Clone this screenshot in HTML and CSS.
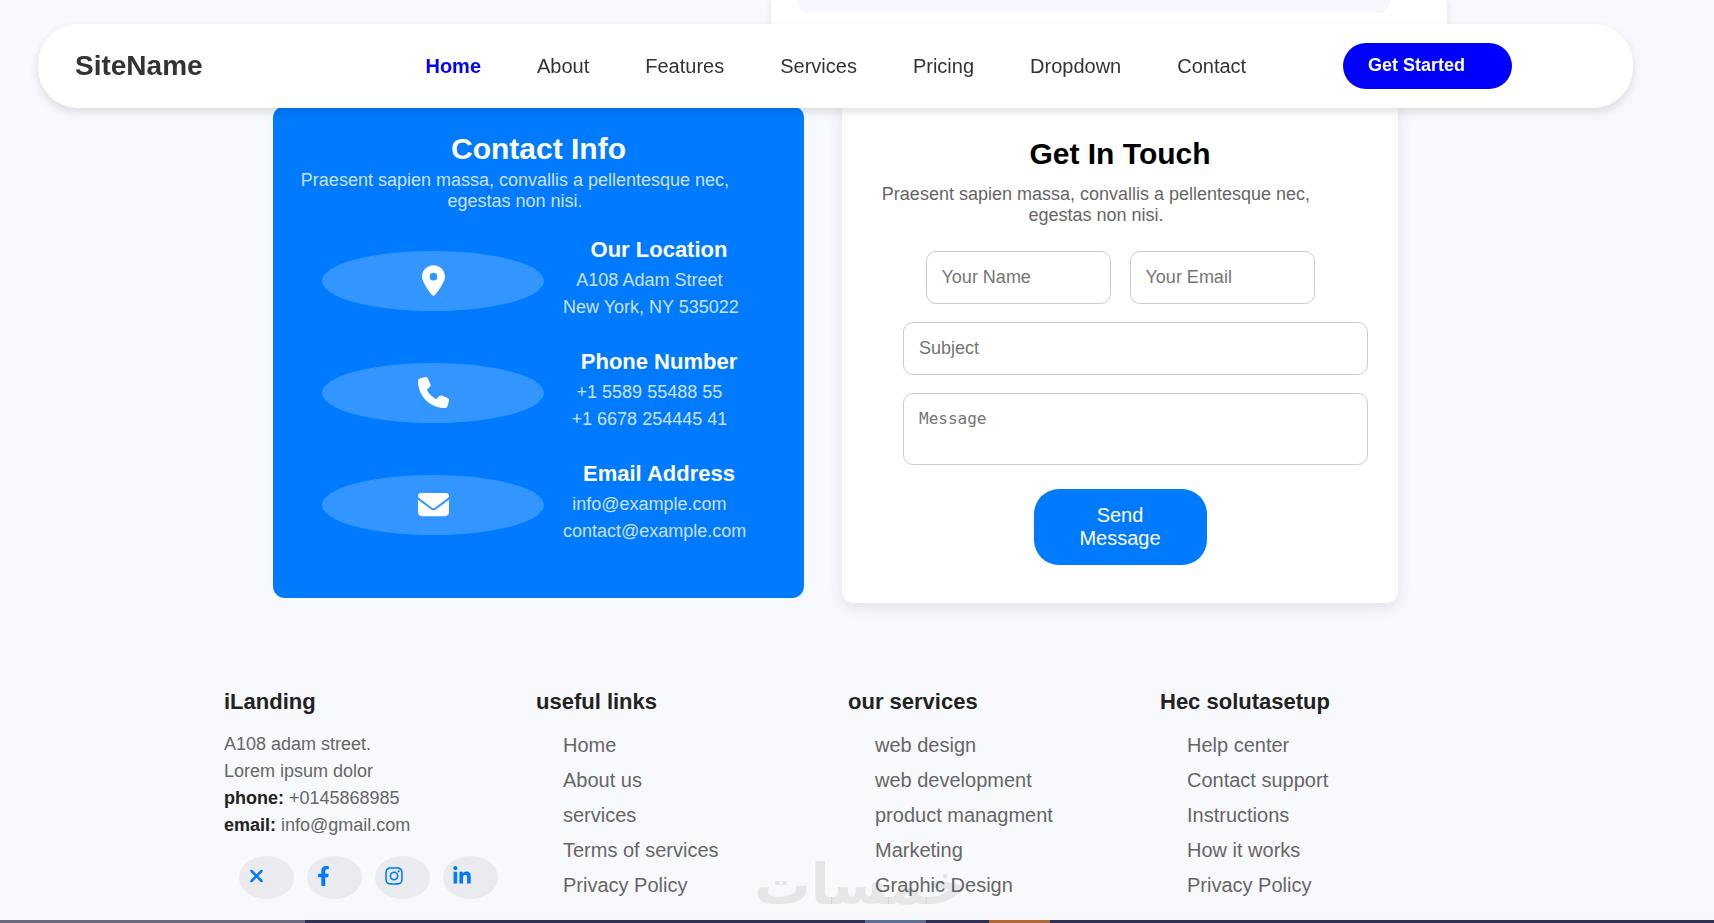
FILE: index.html
```html
<!DOCTYPE html>
<html lang="en">
<head>
    <meta charset="UTF-8">
    <meta name="viewport" content="width=device-width, initial-scale=1.0">
    <title>iLanding</title>
    <link rel="stylesheet" href="styles.css">
</head>
<body>
    <header class="navbar">
        <h1 class="logo">SiteName</h1>
        <nav class="nav-links">
            <a href="#" class="active">Home</a>
            <a href="#">About</a>
            <a href="#">Features</a>
            <a href="#">Services</a>
            <a href="#">Pricing</a>
            <a href="#">Dropdown</a>
            <a href="#">Contact</a>
        </nav>
        <button type="button" class="get-started">Get Started</button>
    </header>

    <div class="faq">
        <div class="faq-item"></div>
    </div>

    <main class="contact">
        <section class="contact-info">
            <h2>Contact Info</h2>
            <p class="intro">Praesent sapien massa, convallis a pellentesque nec, egestas non nisi.</p>
            <div class="info-item">
                <div class="info-icon">
                    <svg width="23" height="31" viewBox="0 0 384 512"><path d="M215.7 499.2C267 435 384 279.4 384 192C384 86 298 0 192 0S0 86 0 192c0 87.400 117 243 168.300 307.200c12.300 15.300 35.100 15.300 47.400 0zM192 128a64 64 0 1 1 0 128 64 64 0 1 1 0-128z"/></svg>
                </div>
                <div class="info-text">
                    <h4>Our Location</h4>
                    <p>A108 Adam Street</p>
                    <p>New York, NY 535022</p>
                </div>
            </div>
            <div class="info-item">
                <div class="info-icon">
                    <svg width="31" height="31" viewBox="0 0 512 512"><path d="M164.900 24.600c-7.700-18.600-28-28.500-47.400-23.200l-88 24C12.100 30.200 0 46 0 64C0 311.400 200.600 512 448 512c18 0 33.800-12.100 38.600-29.500l24-88c5.300-19.400-4.600-39.700-23.200-47.400l-96-40c-16.300-6.800-35.200-2.100-46.300 11.600L304.700 368C234.300 334.700 177.300 277.700 144 207.300L193.300 167c13.700-11.200 18.400-30 11.600-46.300l-40-96z"/></svg>
                </div>
                <div class="info-text">
                    <h4>Phone Number</h4>
                    <p>+1 5589 55488 55</p>
                    <p>+1 6678 254445 41</p>
                </div>
            </div>
            <div class="info-item">
                <div class="info-icon">
                    <svg width="31" height="31" viewBox="0 0 512 512"><path d="M48 64C21.500 64 0 85.500 0 112c0 15.100 7.100 29.300 19.200 38.400L236.800 313.600c11.400 8.500 27 8.500 38.400 0L492.800 150.400c12.100-9.100 19.200-23.300 19.200-38.400c0-26.500-21.500-48-48-48L48 64zM0 176L0 384c0 35.300 28.700 64 64 64l384 0c35.300 0 64-28.700 64-64l0-208L294.400 339.200c-22.800 17.100-54 17.100-76.800 0L0 176z"/></svg>
                </div>
                <div class="info-text">
                    <h4>Email Address</h4>
                    <p>info@example.com</p>
                    <p>contact@example.com</p>
                </div>
            </div>
        </section>

        <section class="contact-form">
            <h2>Get In Touch</h2>
            <p class="intro">Praesent sapien massa, convallis a pellentesque nec, egestas non nisi.</p>
            <form>
                <div class="form-row">
                    <input type="text" placeholder="Your Name" aria-label="Your Name">
                    <input type="email" placeholder="Your Email" aria-label="Your Email">
                </div>
                <input class="wide" type="text" placeholder="Subject" aria-label="Subject">
                <textarea class="wide" placeholder="Message" aria-label="Message"></textarea>
                <button type="submit" class="send">Send Message</button>
            </form>
        </section>
    </main>

    <footer class="footer">
        <div class="footer-col">
            <h3>iLanding</h3>
            <div class="address">
                <p>A108 adam street.</p>
                <p>Lorem ipsum dolor</p>
                <p><strong>phone:</strong> +0145868985</p>
                <p><strong>email:</strong> info@gmail.com</p>
            </div>
            <div class="social">
                <a href="#" aria-label="X"><svg width="15" height="20" viewBox="0 0 384 512"><path d="M342.600 150.600c12.500-12.500 12.500-32.800 0-45.300s-32.800-12.500-45.300 0L192 210.700 86.600 105.400c-12.500-12.500-32.800-12.500-45.300 0s-12.500 32.800 0 45.300L146.700 256 41.400 361.400c-12.500 12.500-12.500 32.800 0 45.300s32.800 12.500 45.300 0L192 301.300 297.400 406.600c12.500 12.500 32.800 12.500 45.300 0s12.500-32.800 0-45.300L237.300 256 342.600 150.600z"/></svg></a>
                <a href="#" aria-label="Facebook"><svg width="13" height="20" viewBox="0 0 320 512"><path d="M279.140 288l14.220-92.660h-88.910v-60.130c0-25.350 12.420-50.060 52.240-50.060h40.420V6.260S260.430 0 225.360 0c-73.220 0-121.080 44.380-121.080 124.720v70.620H22.890V288h81.390v224h100.170V288z"/></svg></a>
                <a href="#" aria-label="Instagram"><svg width="18" height="20" viewBox="0 0 448 512"><path d="M224.100 141c-63.600 0-114.900 51.300-114.900 114.900s51.300 114.900 114.900 114.900S339 319.500 339 255.900 287.700 141 224.100 141zm0 189.600c-41.100 0-74.700-33.500-74.700-74.700s33.500-74.700 74.700-74.700 74.700 33.500 74.700 74.700-33.600 74.700-74.700 74.700zm146.400-194.300c0 14.900-12 26.800-26.800 26.800-14.900 0-26.800-12-26.800-26.800s12-26.800 26.800-26.800 26.800 12 26.800 26.800zm76.100 27.200c-1.700-35.900-9.900-67.700-36.200-93.900-26.200-26.200-58-34.400-93.900-36.200-37-2.100-147.900-2.100-184.900 0-35.800 1.700-67.600 9.900-93.900 36.100s-34.400 58-36.200 93.900c-2.100 37-2.100 147.900 0 184.900 1.700 35.900 9.900 67.700 36.200 93.900s58 34.400 93.900 36.200c37 2.100 147.900 2.100 184.900 0 35.900-1.700 67.700-9.900 93.900-36.200 26.200-26.200 34.400-58 36.200-93.900 2.100-37 2.100-147.800 0-184.800zM398.800 388c-7.800 19.600-22.900 34.700-42.600 42.600-29.500 11.700-99.500 9-132.100 9s-102.700 2.600-132.100-9c-19.600-7.800-34.700-22.900-42.600-42.600-11.700-29.500-9-99.500-9-132.100s-2.600-102.700 9-132.100c7.800-19.600 22.900-34.700 42.600-42.600 29.500-11.700 99.500-9 132.100-9s102.700-2.600 132.100 9c19.600 7.800 34.700 22.900 42.600 42.600 11.700 29.500 9 99.500 9 132.100s2.700 102.700-9 132.100z"/></svg></a>
                <a href="#" aria-label="LinkedIn"><svg width="18" height="20" viewBox="0 0 448 512"><path d="M100.280 448H7.400V148.900h92.880zM53.790 108.100C24.090 108.100 0 83.500 0 53.800a53.790 53.790 0 0 1 107.580 0c0 29.700-24.100 54.300-53.790 54.300zM447.900 448h-92.680V302.400c0-34.700-.7-79.200-48.290-79.200-48.290 0-55.690 37.700-55.690 76.700V448h-92.780V148.900h89.080v40.800h1.300c12.400-23.500 42.690-48.300 87.880-48.300 94 0 111.280 61.900 111.280 142.300V448z"/></svg></a>
            </div>
        </div>
        <div class="footer-col">
            <h3>useful links</h3>
            <ul>
                <li><a href="#">Home</a></li>
                <li><a href="#">About us</a></li>
                <li><a href="#">services</a></li>
                <li><a href="#">Terms of services</a></li>
                <li><a href="#">Privacy Policy</a></li>
            </ul>
        </div>
        <div class="footer-col">
            <h3>our services</h3>
            <ul>
                <li><a href="#">web design</a></li>
                <li><a href="#">web development</a></li>
                <li><a href="#">product managment</a></li>
                <li><a href="#">Marketing</a></li>
                <li><a href="#">Graphic Design</a></li>
            </ul>
        </div>
        <div class="footer-col">
            <h3>Hec solutasetup</h3>
            <ul>
                <li><a href="#">Help center</a></li>
                <li><a href="#">Contact support</a></li>
                <li><a href="#">Instructions</a></li>
                <li><a href="#">How it works</a></li>
                <li><a href="#">Privacy Policy</a></li>
            </ul>
        </div>
        <span class="watermark" lang="ar">خمسات</span>
    </footer>

    <div class="taskbar">
        <span class="task-search"></span>
        <span class="task-blue"></span>
        <span class="task-orange"></span>
    </div>
</body>
</html>
```
FILE: styles.css
```css
* {
    box-sizing: border-box;
    margin: 0;
    padding: 0;
}
body {
    font-family: "Liberation Sans", Arial, sans-serif;
    background-color: #f8f9fd;
    min-height: 100vh;
    display: flex;
    flex-direction: column;
}
a {
    text-decoration: none;
}

/* navbar */
.navbar {
    position: fixed;
    top: 24px;
    left: 38px;
    right: 81px;
    z-index: 10;
    height: 84px;
    display: flex;
    align-items: center;
    padding: 0 121px 0 37px;
    background-color: #fff;
    border-radius: 40px;
    box-shadow: 0 4px 10px rgba(0, 0, 0, 0.12);
}
.logo {
    font-size: 28px;
    color: #333;
}
.nav-links {
    flex: 1;
    display: flex;
    justify-content: center;
    gap: 56px;
    padding-left: 126px;
}
.nav-links a {
    font-size: 20px;
    color: #333;
}
.nav-links a.active {
    color: #0000ff;
    font-weight: bold;
}
.get-started {
    width: 169px;
    height: 46px;
    padding: 0 25px 2px;
    border: none;
    border-radius: 23px;
    background-color: #0000ff;
    color: #fff;
    font-family: inherit;
    font-size: 18px;
    font-weight: bold;
    text-align: left;
    cursor: pointer;
}

/* faq card, scrolled under the navbar */
.faq {
    margin: 0 267px 0 45%;
    height: 40px;
    padding: 0 57px 0 26px;
    background-color: #fff;
    box-shadow: 0 0 6px rgba(0, 0, 0, 0.1);
}
.faq-item {
    height: 13px;
    background-color: #f6f7ff;
    border-radius: 0 0 12px 12px;
}

/* contact */
.contact {
    display: flex;
    align-items: center;
    gap: 38px;
    padding: 60px 316px 31px 273px;
}
.contact h2 {
    font-size: 30px;
    line-height: 35px;
    text-align: center;
}
.intro {
    width: 430px;
    font-size: 18px;
    line-height: 21px;
    text-align: center;
}
.contact-info {
    flex: 531;
    padding: 25px 27px 53px;
    background-color: #007bff;
    color: #fff;
    border-radius: 12px;
}
.contact-info .intro {
    margin: 4px 0 24px;
    color: rgba(255, 255, 255, 0.8);
}
.info-item {
    display: flex;
    gap: 19px;
    padding: 0 22px;
}
.info-item + .info-item {
    margin-top: 27px;
}
.info-icon {
    display: flex;
    align-items: center;
    justify-content: center;
    width: 222px;
    height: 60px;
    margin-top: 15px;
    border-radius: 50%;
    background-color: rgba(255, 255, 255, 0.2);
}
.info-icon svg {
    fill: #fff;
}
.info-text {
    width: 192px;
    text-align: center;
}
.info-text h4 {
    font-size: 22px;
    line-height: 27px;
    margin-bottom: 4px;
}
.info-text p {
    width: 90%;
    font-size: 18px;
    line-height: 27px;
    white-space: nowrap;
    color: rgba(255, 255, 255, 0.8);
}

.contact-form {
    flex: 556;
    padding: 36px 30px 38px;
    background-color: #fff;
    border-radius: 12px;
    box-shadow: 0 4px 15px rgba(0, 0, 0, 0.1);
}
.contact-form .intro {
    margin: 13px 0 25px 9px;
    color: #666;
}
form {
    display: flex;
    flex-direction: column;
    align-items: center;
    gap: 18px;
}
.form-row {
    display: flex;
    gap: 19px;
}
input,
textarea {
    width: 185px;
    height: 53px;
    padding: 15px;
    border: 1px solid #ccc;
    border-radius: 10px;
    font-family: inherit;
    font-size: 18px;
}
.wide {
    width: 465px;
    max-width: 100%;
    align-self: flex-end;
}
textarea {
    height: 72px;
    font-family: "DejaVu Sans Mono", monospace;
    font-size: 16px;
    line-height: 20px;
    resize: none;
}
::placeholder {
    color: #757575;
}
.send {
    width: 173px;
    margin-top: 6px;
    padding: 15px 40px;
    border: none;
    border-radius: 25px;
    background-color: #007bff;
    color: #fff;
    font-family: inherit;
    font-size: 20px;
    line-height: 23px;
    cursor: pointer;
}

/* footer */
.footer {
    position: relative;
    flex: 1;
    display: grid;
    grid-template-columns: repeat(4, 1fr);
    padding: 54px 242px 0 224px;
    background-color: #f8f9fc;
}
.footer h3 {
    font-size: 22px;
    line-height: 28px;
    margin-bottom: 12px;
    color: #222;
}
.address {
    padding-top: 3px;
}
.address p {
    font-size: 18px;
    line-height: 27px;
    color: #666;
}
.address strong {
    color: #222;
}
.social {
    display: flex;
    gap: 13px;
    padding: 17px 0 0 15px;
}
.social a {
    display: flex;
    align-items: center;
    width: 55px;
    height: 43px;
    padding: 0 0 3px 10px;
    border-radius: 50%;
    background-color: #e9ebee;
}
.social svg {
    fill: #007bff;
}
.footer ul {
    list-style: none;
    padding-left: 27px;
}
.footer li {
    font-size: 20px;
    line-height: 35px;
}
.footer li a {
    color: #666;
}
.watermark {
    position: absolute;
    left: 44%;
    bottom: 10px;
    font-family: "DejaVu Sans", sans-serif;
    font-size: 56px;
    font-weight: bold;
    line-height: 56px;
    color: rgba(60, 70, 60, 0.1);
    pointer-events: none;
}

/* taskbar */
.taskbar {
    position: fixed;
    bottom: 0;
    left: 0;
    right: 0;
    height: 3px;
    display: flex;
    background-color: #2f2f57;
}
.task-search {
    width: 305px;
    background-color: #6a6980;
}
.task-blue {
    width: 61px;
    margin-left: 560px;
    background-color: #5e6d9c;
}
.task-orange {
    width: 61px;
    margin-left: 63px;
    background-color: #b0673a;
}
```
